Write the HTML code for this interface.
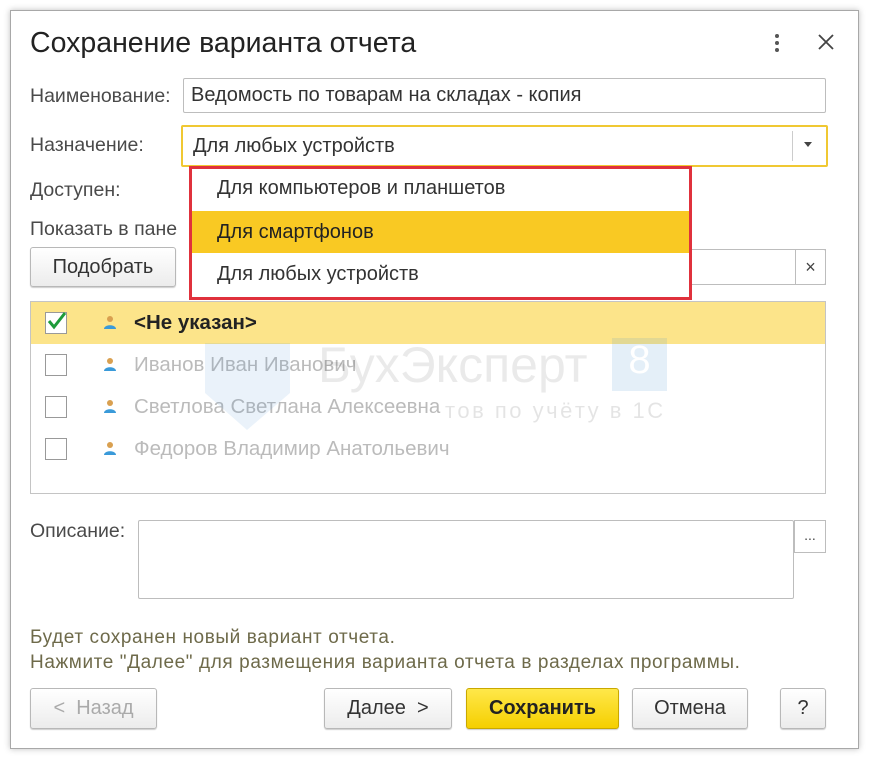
<!DOCTYPE html>
<html><head><meta charset="utf-8"><style>
*{box-sizing:border-box;margin:0;padding:0}
body{width:869px;height:760px;background:#fff;font-family:"Liberation Sans",sans-serif;color:#404040;position:relative;overflow:hidden}
.a{position:absolute}
.dlg{left:10px;top:10px;width:849px;height:739px;border:1px solid #a8a8a8;box-shadow:0 0 6px rgba(0,0,0,.25);background:#fff}
.lbl{font-size:19.5px;color:#4a4a4a}
.inp{border:1px solid #bdbdbd;border-radius:2px;background:#fff;font-size:20px;color:#333;padding-left:7px;display:flex;align-items:center}
.btn{border:1px solid #b8b8b8;border-radius:3px;background:linear-gradient(#fff,#ececec);box-shadow:0 1px 1px rgba(0,0,0,.2);font-size:20px;color:#333;display:flex;align-items:center;justify-content:center}
.row{left:31px;width:794px;height:42px;display:flex;align-items:center;font-size:20.5px;color:#bbb}
.cb{width:22px;height:22px;border:1px solid #999;background:#fff;margin-left:14px;margin-right:67px;position:relative;flex:none}
.ic{position:absolute;left:73px;top:13px;width:12px;height:14px}
.dd{font-size:20px}
</style></head><body>
<div class="a dlg"></div>
<div class="a" style="left:30px;top:27px;font-size:28.5px;color:#222">Сохранение варианта отчета</div>
<div class="a" style="left:775px;top:34px;width:4px;height:20px;font-size:0">
<div style="width:4px;height:4px;background:#555;border-radius:2px;margin-bottom:3px"></div><div style="width:4px;height:4px;background:#555;border-radius:2px;margin-bottom:3px"></div><div style="width:4px;height:4px;background:#555;border-radius:2px"></div></div>
<svg class="a" style="left:818px;top:34px" width="16" height="16"><path d="M1 1L15 15M15 1L1 15" stroke="#444" stroke-width="1.8"/></svg>

<div class="a lbl" style="left:30px;top:85px">Наименование:</div>
<div class="a inp" style="left:183px;top:78px;width:643px;height:35px">Ведомость по товарам на складах - копия</div>

<div class="a lbl" style="left:30px;top:134px">Назначение:</div>
<div class="a inp" style="left:181px;top:125px;width:647px;height:42px;border:2px solid #f0c832;padding-left:10px">Для любых устройств</div>
<div class="a" style="left:792px;top:131px;width:1px;height:30px;background:#ccc"></div>
<svg class="a" style="left:804px;top:142px" width="8" height="5"><path d="M0 0H8L4 5Z" fill="#444"/></svg>

<div class="a lbl" style="left:30px;top:179px">Доступен:</div>
<div class="a lbl" style="left:30px;top:218px">Показать в пане</div>
<div class="a btn" style="left:30px;top:247px;width:146px;height:40px">Подобрать</div>
<div class="a inp" style="left:680px;top:249px;width:146px;height:36px"></div>
<div class="a" style="left:795px;top:249px;width:31px;height:36px;border:1px solid #bdbdbd;display:flex;align-items:center;justify-content:center;font-size:18px;color:#444">×</div>

<div class="a" style="left:30px;top:301px;width:796px;height:193px;border:1px solid #c4c4c4"></div>
<div class="a row" style="top:302px;background:#fce48a;color:#222;font-weight:bold">
 <div class="cb"><svg width="22" height="22" style="position:absolute;left:-1px;top:-3px"><path d="M4 11L9 17L20 3" stroke="#1e9b3a" stroke-width="3" fill="none"/></svg></div>&lt;Не указан&gt;
 <svg class="ic" viewBox="0 0 12 14"><circle cx="6" cy="4" r="3" fill="#d9a050"/><path d="M0 14C0 9 12 9 12 14Z" fill="#3a9ad9"/></svg></div>
<div class="a row" style="top:344px"><div class="cb"></div>Иванов Иван Иванович<svg class="ic" viewBox="0 0 12 14"><circle cx="6" cy="4" r="3" fill="#d9a050"/><path d="M0 14C0 9 12 9 12 14Z" fill="#3a9ad9"/></svg></div>
<div class="a row" style="top:386px"><div class="cb"></div>Светлова Светлана Алексеевна<svg class="ic" viewBox="0 0 12 14"><circle cx="6" cy="4" r="3" fill="#d9a050"/><path d="M0 14C0 9 12 9 12 14Z" fill="#3a9ad9"/></svg></div>
<div class="a row" style="top:428px"><div class="cb"></div>Федоров Владимир Анатольевич<svg class="ic" viewBox="0 0 12 14"><circle cx="6" cy="4" r="3" fill="#d9a050"/><path d="M0 14C0 9 12 9 12 14Z" fill="#3a9ad9"/></svg></div>

<!-- watermark -->
<svg class="a" style="left:200px;top:338px;opacity:.1" width="95" height="95"><path d="M5 5H90V55L47 92L5 55Z" fill="#3a8ad0"/></svg>
<div class="a" style="left:318px;top:336px;font-size:50px;color:#000;opacity:.08">БухЭксперт</div>
<div class="a" style="left:612px;top:338px;width:55px;height:53px;background:#3a8ad0;opacity:.13;color:#fff;font-size:40px;text-align:center">8</div>
<div class="a" style="left:445px;top:398px;font-size:22px;letter-spacing:2.5px;color:#000;opacity:.1">тов по учёту в 1С</div>

<!-- dropdown -->
<div class="a" style="left:189px;top:166px;width:503px;height:134px;border:3px solid #e0313c;background:#fff"></div>
<div class="a" style="left:192px;top:211px;width:497px;height:42px;background:#f9c923"></div>
<div class="a dd" style="left:217px;top:177px;color:#333">Для компьютеров и планшетов</div>
<div class="a dd" style="left:217px;top:221px;color:#222">Для смартфонов</div>
<div class="a dd" style="left:217px;top:263px;color:#333">Для любых устройств</div>

<div class="a lbl" style="left:30px;top:520px">Описание:</div>
<div class="a inp" style="left:138px;top:520px;width:656px;height:79px"></div>
<div class="a" style="left:794px;top:520px;width:32px;height:33px;border:1px solid #bdbdbd;font-size:14px;text-align:center;line-height:28px;color:#444">...</div>

<div class="a" style="left:30px;top:625px;font-size:19px;letter-spacing:.6px;color:#6e6a4a;line-height:25px;white-space:nowrap">Будет сохранен новый вариант отчета.<br>Нажмите "Далее" для размещения варианта отчета в разделах программы.</div>

<div class="a btn" style="left:30px;top:688px;width:127px;height:41px;color:#aaa">&lt;&nbsp; Назад</div>
<div class="a btn" style="left:324px;top:688px;width:128px;height:41px">Далее &nbsp;&gt;</div>
<div class="a btn" style="left:466px;top:688px;width:153px;height:41px;background:linear-gradient(#ffe84a,#f5cf00);border-color:#c9a800;font-weight:bold;color:#222">Сохранить</div>
<div class="a btn" style="left:632px;top:688px;width:116px;height:41px">Отмена</div>
<div class="a btn" style="left:780px;top:688px;width:46px;height:41px">?</div>
</body></html>
